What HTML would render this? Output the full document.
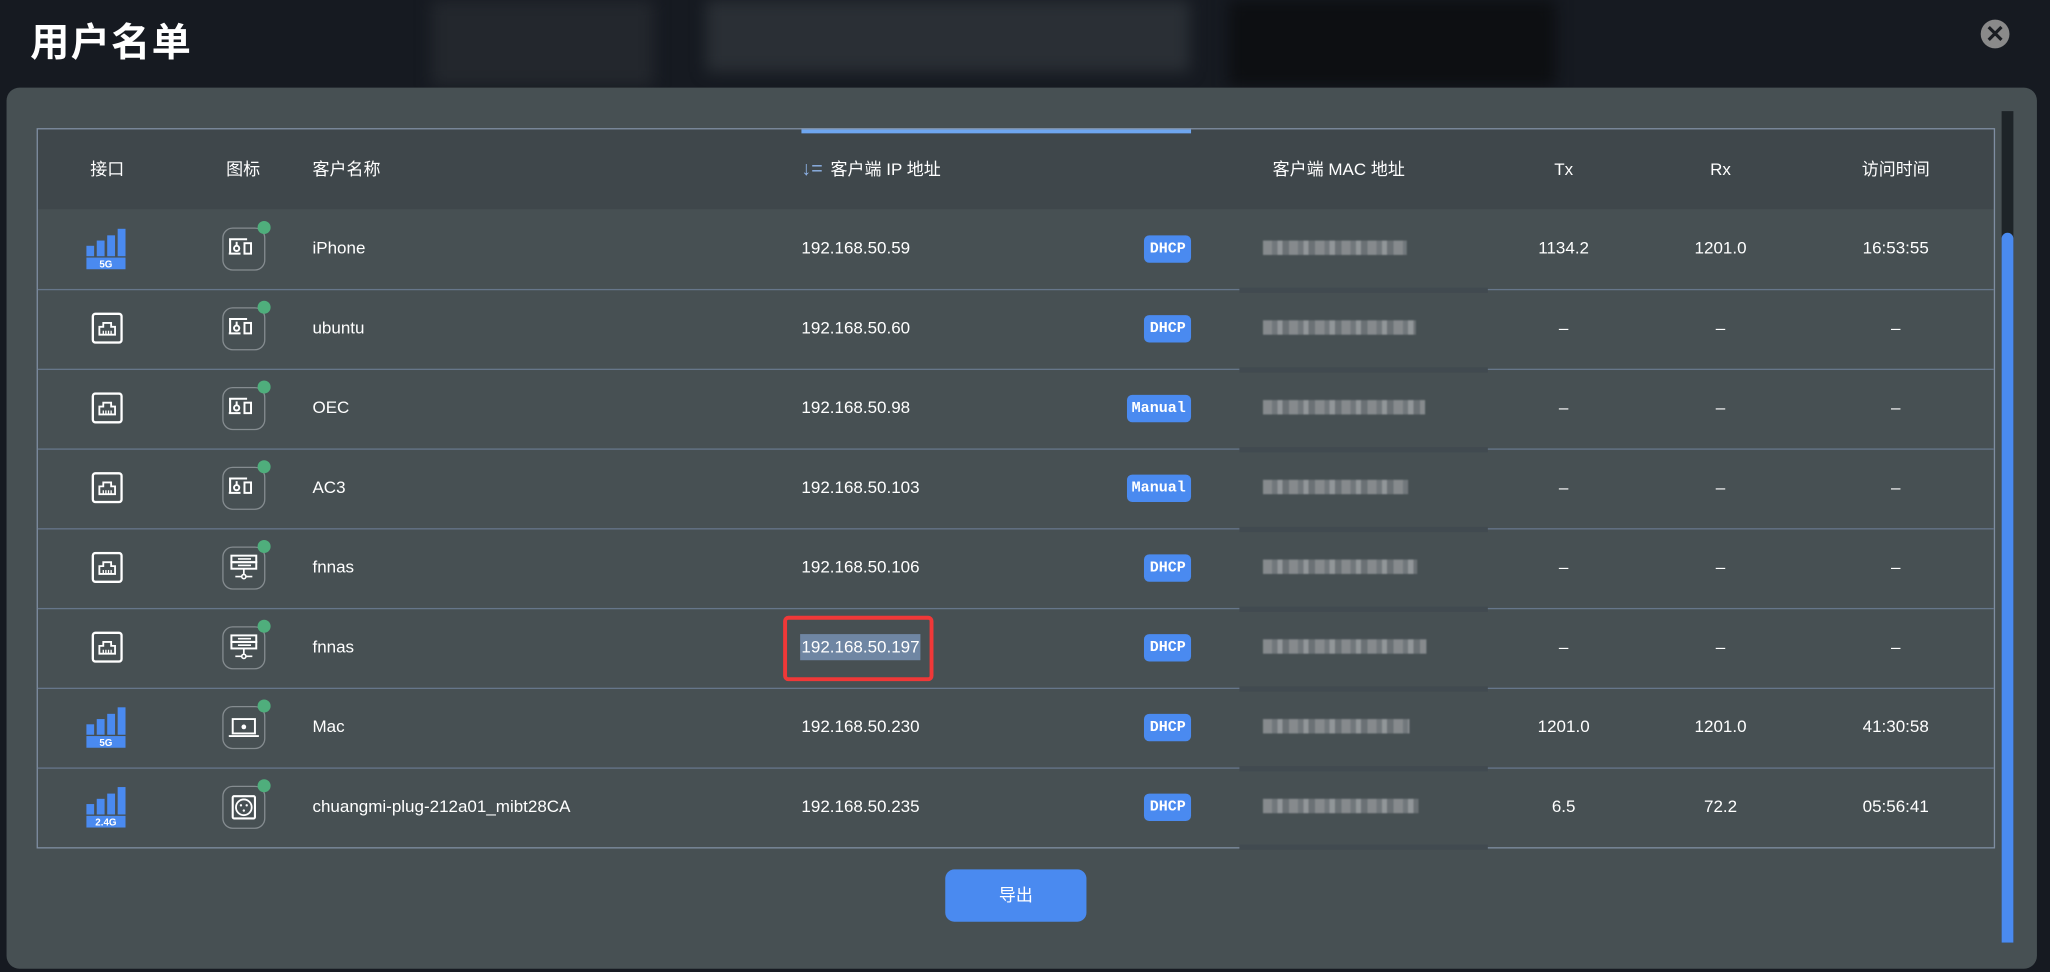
<!DOCTYPE html>
<html><head><meta charset="utf-8"><style>
*{margin:0;padding:0;box-sizing:border-box}
html,body{width:2050px;height:972px;overflow:hidden;background:#161a21}
#s{position:absolute;left:0;top:0;width:1568px;height:743px;transform:scale(1.30740);transform-origin:0 0;font-family:"Liberation Sans","Noto Sans CJK SC",sans-serif;color:#fff}
.a{position:absolute}
.bgblur{background:#23272d;filter:blur(6px)}
.title{left:23px;top:8px;font-size:30px;font-weight:bold;letter-spacing:1px}
.close{left:1515px;top:15px;width:22px;height:22px;border-radius:50%;background:#8a8a8a;color:#1a1d22;font-size:18px;line-height:22px;text-align:center;font-weight:bold}
.panel{left:5px;top:67px;width:1553px;height:674px;border-radius:10px;background:#475053}
.box{left:28px;top:98px;width:1498px;height:551px;border:1px solid #7f8ea2}
.hdr{left:29px;top:99px;width:1496px;height:61px;background:#3f474b}
.th,.td{position:absolute;font-size:13px;line-height:18px;white-space:nowrap}
.c{transform:translateX(-50%)}
.sep{position:absolute;left:29px;width:1496px;height:1px;background:#66768a}
.badge{position:absolute;right:657px;height:21px;padding:0 4px;border-radius:4px;background:#4a8af0;font-family:"Liberation Mono","DejaVu Sans Mono",monospace;font-weight:bold;font-size:11.5px;line-height:21px}
.mac{position:absolute;left:966px;width:120px;height:11px;background:repeating-linear-gradient(90deg,#8d9194 0 7px,#767c80 7px 11px,#9a9ea1 11px 15px,#6f7579 15px 20px);opacity:.9;filter:blur(.6px)}
.dev{position:absolute;left:170px;width:33px;height:33px;border:1px solid #858c90;border-radius:8px}
.dot{position:absolute;right:-5px;top:-6px;width:10px;height:10px;border-radius:50%;background:#4fae7c}
.eth{position:absolute;left:70px;width:24px;height:24px}
.sig{position:absolute;left:66px;width:32px;height:33px}
</style></head><body><div id="s">
<div class="a bgblur" style="left:330px;top:0;width:170px;height:66px"></div>
<div class="a bgblur" style="left:540px;top:0;width:370px;height:55px;background:#2a2f35"></div>
<div class="a bgblur" style="left:940px;top:0;width:250px;height:66px;background:#0d0f12"></div>
<div class="a title">用户名单</div>
<div class="a close">✕</div>
<div class="a panel"></div>
<div class="a hdr"></div>
<div class="a" style="left:613px;top:98px;width:298px;height:4px;background:#6ea6f0"></div>
<div class="a box"></div>
<div class="th c" style="left:82px;top:121px">接口</div>
<div class="th c" style="left:186px;top:121px">图标</div>
<div class="th" style="left:239px;top:121px">客户名称</div>
<div class="th" style="left:613px;top:121px"><span style="color:#8fb4ea;font-size:15px;margin-right:6px">↓=</span>客户端 IP 地址</div>
<div class="th c" style="left:1024px;top:121px">客户端 MAC 地址</div>
<div class="th c" style="left:1196px;top:121px">Tx</div>
<div class="th c" style="left:1316px;top:121px">Rx</div>
<div class="th c" style="left:1450px;top:121px">访问时间</div>
<div class="a" style="left:1531px;top:85px;width:9px;height:636px;background:#1e2428"></div>
<div class="a" style="left:1531px;top:178px;width:9px;height:543px;background:#4a8af0;border-radius:5px 5px 0 0"></div>
<div class="a" style="left:723px;top:665px;width:108px;height:40px;border-radius:7px;background:#4a8af0;font-size:13px;text-align:center;line-height:40px">导出</div>

<svg width="0" height="0" style="position:absolute"><defs>
<g id="e"><rect x="1" y="1" width="22" height="22" rx="2" fill="none" stroke="#fff" stroke-width="1.8"/><path d="M6 17V11h3V8h6v3h3v6z" fill="none" stroke="#fff" stroke-width="1.4"/><path d="M9 14v3M11 14v3M13 14v3M15 14v3" stroke="#fff" stroke-width="1"/></g>
<g id="ph"><path d="M6 20V9h13M5 20h9" fill="none" stroke="#fff" stroke-width="1.6"/><circle cx="11" cy="16" r="2" fill="none" stroke="#fff" stroke-width="1.5"/><path d="M11 14v-3" stroke="#fff" stroke-width="1.5"/><rect x="17" y="12" width="5" height="8" fill="none" stroke="#fff" stroke-width="1.5"/></g>
<g id="sv"><rect x="7" y="7" width="19" height="5" fill="none" stroke="#fff" stroke-width="1.5"/><rect x="7" y="12" width="19" height="5" fill="none" stroke="#fff" stroke-width="1.5"/><path d="M12 9.5h10M12 14.5h10M16.5 17v5M10 23h13" stroke="#fff" stroke-width="1.3"/><circle cx="16.5" cy="23" r="1.6" fill="#475053" stroke="#fff" stroke-width="1.2"/></g>
<g id="mc"><path d="M8 10h17v11H8zM5 23h23" fill="none" stroke="#fff" stroke-width="1.5"/><circle cx="16.5" cy="16" r="1.8" fill="#fff"/></g>
<g id="pl"><rect x="8" y="8" width="17" height="17" rx="1" fill="none" stroke="#fff" stroke-width="1.6"/><circle cx="16.5" cy="16.5" r="6" fill="none" stroke="#fff" stroke-width="1.4"/><circle cx="14.3" cy="15" r=".9" fill="#fff"/><circle cx="18.7" cy="15" r=".9" fill="#fff"/><circle cx="16.5" cy="19" r=".9" fill="#fff"/></g>
</defs></svg>

<div id="rows"></div>
<script>
var R=[["5G","ph","iPhone","192.168.50.59","DHCP","1134.2","1201.0","16:53:55"],
["e","ph","ubuntu","192.168.50.60","DHCP","–","–","–"],
["e","ph","OEC","192.168.50.98","Manual","–","–","–"],
["e","ph","AC3","192.168.50.103","Manual","–","–","–"],
["e","sv","fnnas","192.168.50.106","DHCP","–","–","–"],
["e","sv","fnnas","192.168.50.197","DHCP","–","–","–"],
["5G","mc","Mac","192.168.50.230","DHCP","1201.0","1201.0","41:30:58"],
["2.4G","pl","chuangmi-plug-212a01_mibt28CA","192.168.50.235","DHCP","6.5","72.2","05:56:41"]];
var h="";
for(var i=0;i<8;i++){var r=R[i],t=160+i*61,m=t+30;
if(i>0)h+='<div class="sep" style="top:'+t+'px"></div><div class="a" style="left:948px;top:'+(t-1)+'px;width:190px;height:4px;background:#414a50"></div>';
if(r[0]=="e")h+='<svg class="eth" style="top:'+(m-12)+'px" viewBox="0 0 24 24"><use href="#e"/></svg>';
else h+='<svg class="sig" style="top:'+(m-17)+'px" viewBox="0 0 32 33"><rect x="0" y="15" width="6" height="8" fill="#4a8af0"/><rect x="8" y="11" width="6" height="12" fill="#4a8af0"/><rect x="16" y="7" width="6" height="16" fill="#4a8af0"/><rect x="24" y="2" width="6" height="21" fill="#4a8af0"/><rect x="0" y="24" width="30" height="9" fill="#4a8af0"/><text x="15" y="31.5" font-size="7.5" font-weight="bold" fill="#fff" text-anchor="middle" font-family="Liberation Sans">'+r[0]+'</text></svg>';
h+='<div class="dev" style="top:'+(m-16)+'px"><svg width="33" height="33" viewBox="0 0 33 33" style="position:absolute;left:-1px;top:-1px"><use href="#'+r[1]+'"/></svg><div class="dot"></div></div>';
h+='<div class="td" style="left:239px;top:'+(m-9)+'px">'+r[2]+'</div>';
if(i==5){h+='<div class="a" style="left:599px;top:'+(m-24)+'px;width:115px;height:50px;border:3px solid #f03838;border-radius:4px"></div><div class="td" style="left:612px;top:'+(m-10)+'px;background:#6f86a3;padding:1px 1px">'+r[3]+'</div>';}
else h+='<div class="td" style="left:613px;top:'+(m-9)+'px">'+r[3]+'</div>';
h+='<div class="badge" style="top:'+(m-10)+'px">'+r[4]+'</div>';
h+='<div class="mac" style="top:'+(m-6)+'px;width:'+(110+(i*7)%20)+'px"></div>';
h+='<div class="td c" style="left:1196px;top:'+(m-9)+'px">'+r[5]+'</div><div class="td c" style="left:1316px;top:'+(m-9)+'px">'+r[6]+'</div><div class="td c" style="left:1450px;top:'+(m-9)+'px">'+r[7]+'</div>';}
h+='<div class="a" style="left:948px;top:646px;width:190px;height:4px;background:#414a50"></div>';
document.getElementById("rows").innerHTML=h;
</script>
</div></body></html>
